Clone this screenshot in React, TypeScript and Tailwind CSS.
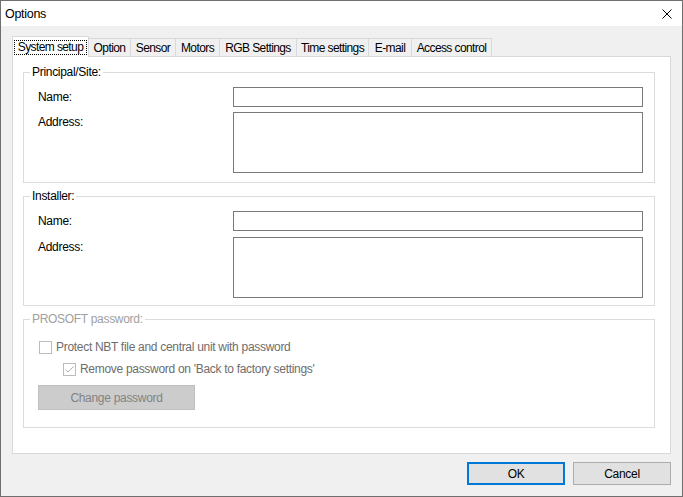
import React from "react";

const tabs = [
  { label: "Option", w: "w-[42px]" },
  { label: "Sensor", w: "w-[45px]" },
  { label: "Motors", w: "w-[44px]" },
  { label: "RGB Settings", w: "w-[77px]" },
  { label: "Time settings", w: "w-[72px]" },
  { label: "E-mail", w: "w-[43px]" },
  { label: "Access control", w: "w-[80px]" },
];

function Group({ title, disabled, children, className }: { title: string; disabled?: boolean; children: React.ReactNode; className?: string }) {
  return (
    <fieldset className={"border border-[#dcdcdc] p-0 m-0 " + (className ?? "")}>
      <legend className={"ml-[6px] px-[2px] leading-[14px] " + (disabled ? "text-[#a0a0a0]" : "text-black")}>{title}</legend>
      {children}
    </fieldset>
  );
}

function Field({ label, tall }: { label: string; tall?: boolean }) {
  return (
    <div className="grid grid-cols-[195px_1fr]">
      <div className={tall ? "pt-[3px]" : "flex items-center"}>{label}</div>
      {tall ? (
        <textarea className="h-[61px] border border-[#7a7a7a] bg-white resize-none outline-none" />
      ) : (
        <input className="h-[20px] border border-[#7a7a7a] bg-white outline-none" />
      )}
    </div>
  );
}

function Check({ checked }: { checked?: boolean }) {
  return (
    <span className="w-[13px] h-[13px] border border-[#bcbcbc] bg-white flex items-center justify-center shrink-0">
      {checked && (
        <svg width="11" height="11" viewBox="0 0 11 11">
          <path d="M1.5 5.5 L4 8 L9.5 2.5" fill="none" stroke="#b0b0b0" strokeWidth="1" />
        </svg>
      )}
    </span>
  );
}

export default function App() {
  return (
    <div className="w-[683px] h-[497px] border border-[#6f6f6f] flex flex-col bg-[#f0f0f0] text-[12px] leading-[14px] text-black font-['Liberation_Sans',Arial,sans-serif] tracking-[-0.3px]">
      <div className="h-[25px] bg-white flex items-center justify-between pl-[4px] pr-[10px] shrink-0">
        <span className="text-[12.5px]">Options</span>
        <svg width="10" height="10" viewBox="0 0 10 10">
          <path d="M0.5 0.5 L9.5 9.5 M9.5 0.5 L0.5 9.5" stroke="#000" strokeWidth="1" />
        </svg>
      </div>
      <div className="flex-1 flex flex-col pt-[10px] pl-[11px] pr-[11px]">
        <div className="flex items-end h-[20px] tracking-[-0.6px]">
          <div className="relative z-10 -mb-px h-[21px] w-[77px] bg-white border border-b-0 border-[#d9d9d9] flex items-center justify-center">
            <span className="outline-1 outline-dotted outline-black px-[3px] leading-[13px]">System setup</span>
          </div>
          {tabs.map((t) => (
            <div key={t.label} className={"h-[18px] border-t border-r border-[#d9d9d9] bg-[#f0f0f0] flex items-center justify-center whitespace-nowrap " + t.w}>
              {t.label}
            </div>
          ))}
        </div>
        <div className="h-[398px] bg-white border border-[#d9d9d9] pt-[8px] pl-[10px] pr-[15px] flex flex-col gap-[6px]">
          <Group title="Principal/Site:">
            <div className="flex flex-col gap-[5px] pt-[8px] pb-[9px] pl-[14px] pr-[11px]">
              <Field label="Name:" />
              <Field label="Address:" tall />
            </div>
          </Group>
          <Group title="Installer:">
            <div className="flex flex-col gap-[6px] pt-[8px] pb-[7px] pl-[14px] pr-[11px]">
              <Field label="Name:" />
              <Field label="Address:" tall />
            </div>
          </Group>
          <Group title="PROSOFT password:" disabled>
            <div className="flex flex-col pt-[13px] pb-[17px] pl-[14px] text-[#6d6d6d]">
              <div className="flex items-center gap-[4px] h-[16px] pl-px">
                <Check />
                <span>Protect NBT file and central unit with password</span>
              </div>
              <div className="flex items-center gap-[4px] h-[16px] pl-[25px] mt-[6px]">
                <Check checked />
                <span>Remove password on 'Back to factory settings'</span>
              </div>
              <div className="mt-[8px] w-[157px] h-[25px] bg-[#cccccc] border border-[#bfbfbf] flex items-center justify-center text-[#838383]">
                Change password
              </div>
            </div>
          </Group>
        </div>
        <div className="flex justify-end gap-[8px] mt-[8px]">
          <button className="w-[98px] h-[23px] bg-[#e1e1e1] border-2 border-[#0078d7]">OK</button>
          <button className="w-[98px] h-[23px] bg-[#e1e1e1] border border-[#adadad]">Cancel</button>
        </div>
      </div>
    </div>
  );
}
